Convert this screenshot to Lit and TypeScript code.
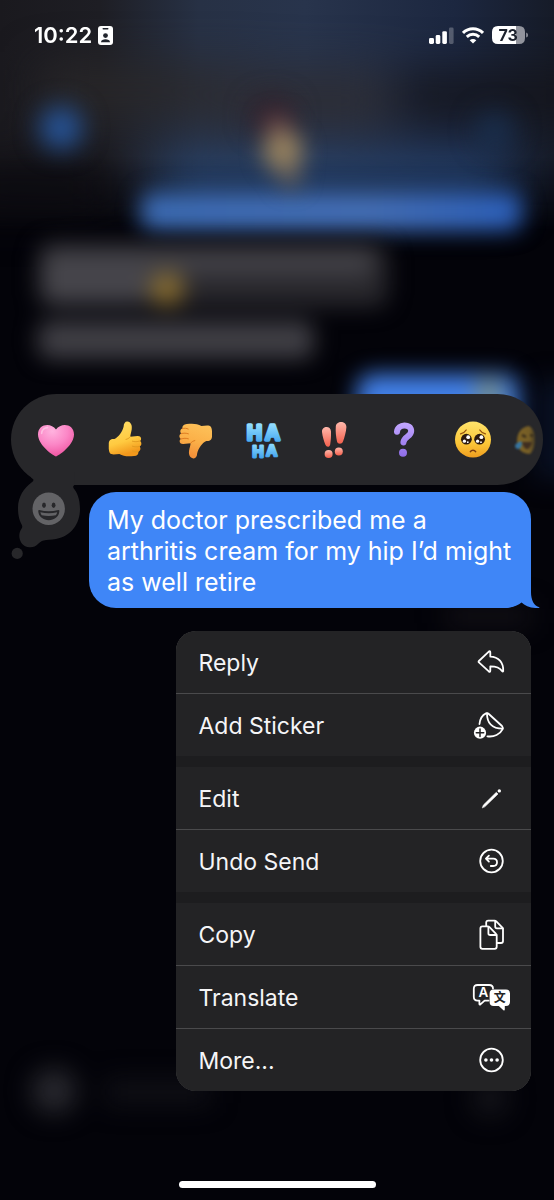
import { LitElement, html, css, svg, TemplateResult, SVGTemplateResult } from "lit";
import { customElement, property } from "lit/decorators.js";

type IconName = "reply" | "sticker" | "edit" | "undo" | "copy" | "translate" | "more";

const icons: Record<IconName, SVGTemplateResult> = {
  reply: svg`<path d="M7.9 15 L17.8 5.6 Q19.3 4.6 19.3 6.6 V10.6 C27.5 10.8 32.6 16.4 32.2 25.2 Q31.8 26 31.2 25.2 C28.8 21.6 25.5 20.4 19.3 20.4 V24.4 Q19.3 26.5 17.8 25.4 L7.9 16.4 Q7.2 15.7 7.9 15 Z"/>`,
  sticker: svg`
    <path d="M8.5 15 C9 10 11.6 6 15 4.4 Q16.5 3.8 17.8 5 L31 17 Q32.3 18.4 31.6 20.2 C29.2 25.4 23 28.2 16.4 27.3"/>
    <path d="M16 4.4 C16 13.4 20.5 19.6 31.7 19.6"/>
    <circle cx="9" cy="23.7" r="6.1" fill="#fff" stroke="none"/>
    <path d="M9 20 V27.4 M5.3 23.7 H12.7" stroke="#232325" stroke-width="1.5"/>`,
  edit: svg`
    <path d="M11.4 25.6 L12.4 23 L25.3 10.3 L27 12 L14 24.6 Z" fill="#fff" stroke-width="0.6"/>
    <circle cx="28.3" cy="8.9" r="1.7" fill="#fff" stroke="none"/>`,
  undo: svg`
    <circle cx="20.5" cy="16" r="11.3"/>
    <path d="M17.9 10.6 L14.9 13.6 L17.9 16.6 M15.2 13.6 H22.2 C27.3 13.6 27.3 21 22.2 21 H19.8"/>`,
  copy: svg`
    <path d="M15.2 7.8 V4.6 Q15.2 2.6 17.2 2.6 H23.6 Q24.6 2.6 25.3 3.3 L31.4 9.6 Q32 10.3 32 11.3 V23 Q32 25 30 25 H26"/>
    <path d="M24.2 3 V8.6 Q24.2 10.4 26 10.4 H31.8"/>
    <path d="M11.4 8.4 H16.8 Q17.8 8.4 18.5 9.1 L25 15.9 Q25.7 16.6 25.7 17.6 V28.8 Q25.7 30.8 23.7 30.8 H11.4 Q9.4 30.8 9.4 28.8 V10.4 Q9.4 8.4 11.4 8.4 Z"/>
    <path d="M17.4 8.8 V15.2 Q17.4 17 19.2 17 H25.4"/>`,
  translate: svg`
    <path d="M17.6 19.6 H13.6 L9.4 23.4 Q8.4 24 8.4 22.8 V19.6 H6.6 Q2.8 19.6 2.8 15.8 V7.8 Q2.8 4 6.6 4 H18.2 Q22 4 22 7.6"/>
    <text class="glyph" x="12.4" y="16.2" font-size="13.5" font-weight="600" fill="#fff" stroke="none" text-anchor="middle">A</text>
    <path d="M22.6 8.6 H35 Q39 8.6 39 12.6 V21 Q39 25 35 25 H33.8 V28.6 Q33.6 30.2 32.4 29.2 L27.8 25 H22.6 Q18.6 25 18.6 21 V12.6 Q18.6 8.6 22.6 8.6 Z" fill="#fff" stroke="none"/>
    <text class="glyph-cjk" x="28.7" y="21" font-size="12" font-weight="700" fill="#232325" stroke="none" text-anchor="middle">文</text>`,
  more: svg`
    <circle cx="20.5" cy="16" r="11.3"/>
    <g fill="#fff" stroke="none"><circle cx="14.9" cy="16" r="1.8"/><circle cx="20.5" cy="16" r="1.8"/><circle cx="26.1" cy="16" r="1.8"/></g>`,
};

@customElement("menu-item")
class MenuItem extends LitElement {
  @property() label = "";
  @property() icon: IconName = "more";

  static styles = css`
    :host { display: block; }
    .item {
      display: flex; align-items: center; justify-content: space-between;
      width: 100%; height: 62px; padding: 0 20px 0 22px; border: 0;
      background: #232325; color: #f5f5f7; text-align: left;
      font: 400 23px/30px Inter, "Liberation Sans", sans-serif;
    }
    .label { padding-top: 2px; }
    .icon { display: block; width: 40px; height: 32px; fill: none; stroke: #fff; stroke-width: 1.8; stroke-linecap: round; stroke-linejoin: round; }
    .glyph { font-family: Inter, sans-serif; }
    .glyph-cjk { font-family: "Noto Sans CJK SC", sans-serif; }
  `;

  render() {
    return html`<button class="item" type="button">
      <span class="label">${this.label}</span>
      <svg class="icon" viewBox="0 0 40 32" aria-hidden="true">${icons[this.icon]}</svg>
    </button>`;
  }
}

const thumb = (fill: string, line: string) => svg`
  <path d="M2.8 23 C2.6 19.6 4.8 17.6 8.4 18 C12.4 16.4 16.2 11 17.6 5.8 C17.8 2.4 19.2 0.4 21.4 0.6 C25 1 26.4 4.6 25.7 8.4 C25.2 11.4 24.4 13.6 24.2 15.8 L31.6 15 C35.4 14.8 36 18.8 34 20 C36 21.4 35.8 24.6 33.6 25.4 C35.2 27 34.4 30 32.4 30.4 C32.8 33 31.2 34.8 28 35 C22 35.8 17.4 35.4 13.4 33 C10 33 5.6 34.4 3.8 32 C2.4 29.4 2.8 26 2.8 23 Z" fill=${fill}/>
  <path d="M34 20 C31 20.9 28.6 20.9 26.4 20.2 M33.6 25.4 C31 26 28.8 26 26.4 25.2 M32.4 30.4 C30.2 31 28.4 30.8 26.6 30 M24.2 15.8 C23 17.4 21.4 18.2 20 18.4" fill="none" stroke=${line} stroke-width="0.9" stroke-linecap="round"/>`;

interface Reaction { label: string; art: SVGTemplateResult; }

const reactions: Reaction[] = [
  {
    label: "Love",
    art: svg`<defs><radialGradient id="heart" cx="0.4" cy="0.2" r="0.85"><stop offset="0" stop-color="#ffb3df"/><stop offset="0.5" stop-color="#fb86c6"/><stop offset="1" stop-color="#ee4f9d"/></radialGradient></defs>
      <path d="M19 35.6 C14 33 1 23.6 1 13.2 C1 3 13.8 0.8 19 8.6 C24.2 0.8 37 3 37 13.2 C37 23.6 24 33 19 35.6 Z" fill="url(#heart)"/>
      <path d="M4.6 12.4 C5 8.8 7.6 6.6 10.6 6.6" fill="none" stroke="#ffd0ea" stroke-width="1.6" stroke-linecap="round" opacity="0.7"/>`,
  },
  {
    label: "Like",
    art: svg`<defs><linearGradient id="up" x1="0" y1="0" x2="0.3" y2="1"><stop offset="0" stop-color="#ffe06a"/><stop offset="0.65" stop-color="#ffca40"/><stop offset="1" stop-color="#f2981c"/></linearGradient></defs>${thumb("url(#up)", "#e09a20")}`,
  },
  {
    label: "Dislike",
    art: svg`<defs><linearGradient id="down" x1="0" y1="1" x2="0.3" y2="0"><stop offset="0" stop-color="#fdc45c"/><stop offset="0.6" stop-color="#fbb048"/><stop offset="1" stop-color="#f4923a"/></linearGradient></defs>
      <g transform="rotate(180 19.4 19)">${thumb("url(#down)", "#d9761e")}</g>`,
  },
  {
    label: "Laugh",
    art: svg`<defs><linearGradient id="haha" gradientUnits="userSpaceOnUse" x1="0" y1="2" x2="0" y2="38"><stop offset="0" stop-color="#97e0ff"/><stop offset="0.54" stop-color="#45a8f0"/><stop offset="0.58" stop-color="#8cdaff"/><stop offset="1" stop-color="#3d9fec"/></linearGradient></defs>
      <text class="haha" fill="url(#haha)" stroke="url(#haha)" stroke-linejoin="round" text-anchor="middle"><tspan x="9.4" y="19.4" font-size="20" stroke-width="3.6">H</tspan><tspan x="27.6" y="19" font-size="20" stroke-width="3.4">A</tspan><tspan x="13" y="35.6" font-size="15" stroke-width="2.8">H</tspan><tspan x="26.8" y="35.4" font-size="15" stroke-width="2.6">A</tspan></text>`,
  },
  {
    label: "Emphasize",
    art: svg`<defs><linearGradient id="bang" x1="0" y1="0" x2="0" y2="1"><stop offset="0" stop-color="#ffb8ab"/><stop offset="1" stop-color="#f4604d"/></linearGradient></defs>
      <g fill="url(#bang)">
        <path d="M7 11 C6.6 4.8 15.8 4.4 16 10.4 C16.2 15.4 15.8 19.6 15.2 23.4 C14.6 26.4 11.6 26.6 10.4 23.8 C8.8 19.6 7.6 15.8 7 11 Z"/>
        <path d="M20.8 5.6 C21.2 -0.8 31.6 -0.4 31.4 6.2 C31 11.2 29.6 16 28 20.6 C27 23.6 22.8 23.6 22 20.6 C21 15.6 20.4 10.4 20.8 5.6 Z"/>
        <circle cx="13.6" cy="33" r="4"/><circle cx="23.8" cy="30.4" r="4"/>
      </g>`,
  },
  {
    label: "Question",
    art: svg`<defs><linearGradient id="ask" gradientUnits="userSpaceOnUse" x1="0" y1="2" x2="0" y2="37"><stop offset="0" stop-color="#c2a6ff"/><stop offset="1" stop-color="#8c6ae6"/></linearGradient></defs>
      <path d="M12 10.8 C12.6 2.4 26.2 2.4 26.2 10 C26.2 15.6 19 15.6 18.4 21.4" fill="none" stroke="url(#ask)" stroke-width="6" stroke-linecap="round"/>
      <circle cx="18" cy="31.8" r="4" fill="url(#ask)"/>`,
  },
  {
    label: "Pleading face",
    art: svg`<defs><linearGradient id="face" x1="0" y1="0" x2="0" y2="1"><stop offset="0" stop-color="#ffe36b"/><stop offset="0.6" stop-color="#fbc638"/><stop offset="1" stop-color="#ee9d1f"/></linearGradient></defs>
      <circle cx="19" cy="18.6" r="18" fill="url(#face)"/>
      <path d="M6.6 12.8 C9 12.2 11 11 12.2 9 M31.4 12.8 C29 12.2 27 11 25.8 9" fill="none" stroke="#93500d" stroke-width="1.3" stroke-linecap="round"/>
      <circle cx="12.4" cy="18.2" r="5.4" fill="#2c1a10"/><circle cx="25.6" cy="18.2" r="5.4" fill="#2c1a10"/>
      <g fill="#fff"><circle cx="14.2" cy="16.2" r="1.9"/><circle cx="10.4" cy="20.2" r="1.6"/><circle cx="13.8" cy="21.2" r="0.9"/><circle cx="27.4" cy="16.2" r="1.9"/><circle cx="23.6" cy="20.2" r="1.6"/><circle cx="27" cy="21.2" r="0.9"/></g>
      <path d="M16.4 30.6 C17.6 28.8 20.4 28.8 21.6 30.6" fill="none" stroke="#7a3c10" stroke-width="1.6" stroke-linecap="round"/>`,
  },
];

@customElement("reaction-bar")
class ReactionBar extends LitElement {
  static styles = css`
    :host { display: block; }
    .bar {
      display: grid; grid-template-columns: repeat(7, 1fr) 35px; align-items: center;
      height: 91px; padding-left: 10px; border-radius: 46px; background: #27272a; overflow: hidden;
    }
    .reaction { display: grid; place-items: center; width: 100%; height: 91px; padding: 0; border: 0; background: none; }
    .art { display: block; width: 38px; height: 38px; overflow: visible; }
    .art-next { display: block; width: 20px; height: 34px; filter: blur(1px); opacity: 0.6; }
    .haha { font-family: Inter, sans-serif; font-weight: 600; }
  `;

  render() {
    return html`<div class="bar" role="toolbar" aria-label="Reactions">
      ${reactions.map((r) => html`<button class="reaction" type="button" aria-label=${r.label}>
        <svg class="art" viewBox="0 0 38 38" aria-hidden="true">${r.art}</svg>
      </button>`)}
      <button class="reaction" type="button" aria-label="More reactions">
        <svg class="art-next" viewBox="0 0 20 34" aria-hidden="true">
          <defs><linearGradient id="fade"><stop offset="0" stop-color="#b98b22"/><stop offset="0.7" stop-color="#a88227"/><stop offset="1" stop-color="#5c4b22"/></linearGradient></defs>
          <path d="M14 3 C6 4 2 10 2 18 C2 26 7 31 15 31 C19 27 20 22 20 17 C20 10 18 5 14 3 Z" fill="url(#fade)"/>
          <path d="M7 12 L11 14 M15 12 L18 13" stroke="#3a2a12" stroke-width="2"/>
          <path d="M7 19 H17 Q15 27 11 26 Q8 24 7 19 Z" fill="#51341c"/>
          <path d="M0 22 Q5 17 7 19 Q7 26 3 26 Q0 26 0 22 Z" fill="#43a9ee"/>
        </svg>
      </button>
    </div>`;
  }
}

@customElement("chat-backdrop")
class ChatBackdrop extends LitElement {
  static styles = css`
    :host { display: block; background: #030309; overflow: hidden; }
    .scene { display: block; width: 100%; height: 1200px; }
  `;

  render(): TemplateResult {
    return html`<svg class="scene" viewBox="0 0 554 1200" preserveAspectRatio="none" aria-hidden="true">
      <defs>
        <filter id="b10" color-interpolation-filters="sRGB" x="-60%" y="-150%" width="220%" height="400%"><feGaussianBlur stdDeviation="11"/></filter>
        <filter id="b14" color-interpolation-filters="sRGB" x="-100%" y="-150%" width="300%" height="400%"><feGaussianBlur stdDeviation="13"/></filter>
        <filter id="b26" color-interpolation-filters="sRGB" x="-50%" y="-100%" width="200%" height="300%"><feGaussianBlur stdDeviation="24"/></filter>
        <linearGradient id="head"><stop offset="0" stop-color="#1a191e"/><stop offset="0.18" stop-color="#1e1e24"/><stop offset="0.36" stop-color="#273145"/><stop offset="0.55" stop-color="#28344c"/><stop offset="0.82" stop-color="#1c2740"/><stop offset="1" stop-color="#161b28"/></linearGradient>
        <linearGradient id="sent"><stop offset="0" stop-color="#3c6cb6"/><stop offset="0.6" stop-color="#4570b8"/><stop offset="1" stop-color="#2c61be"/></linearGradient>
        <linearGradient id="edge" x1="0" y1="0" x2="0" y2="1"><stop offset="0" stop-color="#fff"/><stop offset="0.68" stop-color="#fff"/><stop offset="1" stop-color="#000"/></linearGradient>
        <mask id="headMask"><rect width="554" height="230" fill="url(#edge)"/></mask>
      </defs>
      <rect width="554" height="230" fill="url(#head)" mask="url(#headMask)"/>
      <g filter="url(#b26)">
        <rect x="40" y="68" width="220" height="44" fill="#2a2829"/>
        <rect x="200" y="72" width="190" height="56" fill="#2d2d34"/>
        <rect x="400" y="74" width="190" height="44" fill="#14141a"/>
        <rect x="160" y="160" width="350" height="44" fill="#284d83" opacity="0.75"/>
        <rect x="-40" y="165" width="150" height="45" fill="#0b0a0f"/>
      </g>
      <g filter="url(#b14)">
        <circle cx="61" cy="128" r="21" fill="#27579e"/>
        <circle cx="495" cy="130" r="20" fill="#1b375e" opacity="0.6"/>
        <ellipse cx="272" cy="116" rx="22" ry="18" fill="#30202c"/>
      </g>
      <rect x="141" y="193" width="380" height="37" rx="10" fill="url(#sent)" filter="url(#b10)"/>
      <g filter="url(#b10)">
        <ellipse cx="277" cy="124" rx="13" ry="9" fill="#6e4a4b"/>
        <ellipse cx="283" cy="151" rx="20" ry="20" fill="#98825e"/>
        <ellipse cx="290" cy="176" rx="10" ry="12" fill="#6b6259"/>
        <rect x="38" y="243" width="350" height="64" rx="14" fill="#28272c"/>
        <rect x="42" y="248" width="332" height="28" rx="12" fill="#414046"/>
        <rect x="42" y="262" width="108" height="40" rx="12" fill="#46454b"/>
        <ellipse cx="167" cy="289" rx="17" ry="17" fill="#866b30"/>
        <rect x="38" y="321" width="276" height="38" rx="12" fill="#403f45"/>
        <rect x="357" y="374" width="162" height="60" rx="16" fill="#4280e8"/>
        <ellipse cx="489" cy="394" rx="14" ry="15" fill="#7b8f80"/>
      </g>
      <g filter="url(#b14)">
        <rect x="534" y="380" width="60" height="100" fill="#0d1c3a" opacity="0.5"/>
        <circle cx="54" cy="1091" r="22" fill="#2a2a30"/>
        <rect x="105" y="1080" width="105" height="24" fill="#101016"/>
        <circle cx="490" cy="1098" r="18" fill="#14141a"/>
        <rect x="445" y="606" width="86" height="20" fill="#131116"/>
      </g>
    </svg>`;
  }
}

@customElement("app-root")
class AppRoot extends LitElement {
  static styles = css`
    :host { display: block; font-family: Inter, "Liberation Sans", sans-serif; color: #fff; }
    .screen { position: relative; isolation: isolate; display: flex; flex-direction: column; min-height: 100vh; box-sizing: border-box; padding-bottom: 12px; overflow: hidden; }
    .backdrop { position: absolute; inset: 0; z-index: -1; }
    .status { display: flex; align-items: center; justify-content: space-between; height: 70px; padding: 0 26px 0 34px; }
    .status-group { display: flex; align-items: center; gap: 8px; }
    .status-group-tight { gap: 6px; }
    .time { font-size: 22px; line-height: 26px; font-weight: 600; }
    .status svg { display: block; }
    .battery-level { font: 700 16px Inter, sans-serif; }
    .overlay { display: flex; flex-direction: column; margin-top: 324px; }
    .reactions { margin: 0 11px; }
    .message-row { display: flex; gap: 9px; margin-top: 7px; padding: 0 23px 0 11px; }
    .custom { flex: none; width: 69px; height: 70px; padding: 0; border: 0; background: none; }
    .custom svg { display: block; overflow: visible; }
    .bubble { position: relative; flex: 1; margin: 0; padding: 13px 14px 10px 18px; border-radius: 27px; background: #3f86f7; font-size: 25px; line-height: 31px; }
    .tail { position: absolute; right: -9px; bottom: 0; }
    .menu { display: flex; flex-direction: column; gap: 11px; align-self: flex-end; width: 64%; margin: 23px 23px 0 0; border-radius: 20px; overflow: hidden; background: #1d1d1f; }
    .menu-group { display: flex; flex-direction: column; gap: 1px; background: #4a4a4c; }
    .home { width: 197px; height: 7px; margin: auto auto 0; border-radius: 4px; background: #fff; }
  `;

  private groups: { label: string; icon: IconName }[][] = [
    [{ label: "Reply", icon: "reply" }, { label: "Add Sticker", icon: "sticker" }],
    [{ label: "Edit", icon: "edit" }, { label: "Undo Send", icon: "undo" }],
    [{ label: "Copy", icon: "copy" }, { label: "Translate", icon: "translate" }, { label: "More...", icon: "more" }],
  ];

  render() {
    return html`<div class="screen">
      <chat-backdrop class="backdrop"></chat-backdrop>
      <header class="status">
        <div class="status-group status-group-tight">
          <span class="time">10:22</span>
          <svg width="15" height="19" viewBox="0 0 15 19" aria-hidden="true">
            <rect width="15" height="19" rx="3" fill="#fff"/>
            <rect x="4.5" y="2" width="6" height="1.4" rx="0.7" fill="#20242c"/>
            <circle cx="7.5" cy="9.6" r="2.4" fill="#20242c"/>
            <path d="M3 16.2 C3 12.4 12 12.4 12 16.2 Z" fill="#20242c"/>
          </svg>
        </div>
        <div class="status-group">
          <svg width="25" height="17" viewBox="0 0 25 17" aria-hidden="true" fill="#fff">
            <rect x="0" y="11" width="5" height="6" rx="1.4"/><rect x="6.7" y="8" width="4.6" height="9" rx="1.4"/>
            <rect x="13.3" y="4.2" width="4.6" height="12.8" rx="1.4"/><rect x="20" y="0.6" width="4.6" height="16.4" rx="1.4" opacity="0.25"/>
          </svg>
          <svg width="22" height="17" viewBox="0 0 22 17" aria-hidden="true" fill="none" stroke="#fff" stroke-width="3">
            <path d="M1 5.9 C6.6 0.4 15.4 0.4 21 5.9"/><path d="M4.8 9.8 C8.4 6.5 13.6 6.5 17.2 9.8"/>
            <path d="M11 16.6 L7.7 13.3 C9.6 11.5 12.4 11.5 14.3 13.3 Z" fill="#fff" stroke="none"/>
          </svg>
          <svg width="36" height="18" viewBox="0 0 36 18" role="img" aria-label="Battery 73 percent">
            <path d="M24 0 H27 Q33 0 33 6 V12 Q33 18 27 18 H24 Z" fill="#92949d"/>
            <path d="M6 0 H24 V18 H6 Q0 18 0 12 V6 Q0 0 6 0 Z" fill="#fff"/>
            <path d="M34.2 6.4 Q36 7 36 9 T34.2 11.6 Z" fill="#92949d"/>
            <text class="battery-level" x="16.2" y="14.8" text-anchor="middle" fill="#1c212c">73</text>
          </svg>
        </div>
      </header>

      <main class="overlay">
        <reaction-bar class="reactions"></reaction-bar>
        <section class="message-row">
          <button class="custom" type="button" aria-label="React with emoji">
            <svg width="69" height="70" viewBox="0 0 69 70" aria-hidden="true">
              <g fill="#27272a">
                <path d="M26 -20 L20 -14.6 Q22 -13.2 22.4 -12.6 Q23 -11 20.5 -9.4 C13 -4 7 5 7 16 C7 24 8.6 29 11 33.2 Q12 35.4 10.4 37 C6.4 42 8 54.4 18.4 55.2 C26 55.8 27.6 49.4 32.6 48.4 C36 47.8 40 48 45 47 C60 44 69 32 69 17 C69 7 66 0 62.4 -4 Q61.4 -6 63.6 -7.2 V-20 Z"/>
                <circle cx="6.2" cy="61.4" r="5.6"/>
              </g>
              <circle cx="37.7" cy="16.8" r="16.2" fill="#636366"/>
              <ellipse cx="33" cy="13.2" rx="1.9" ry="2.7" fill="#27272a"/><ellipse cx="42.6" cy="13.2" rx="1.9" ry="2.7" fill="#27272a"/>
              <path d="M27.2 18.8 Q27.2 18 28.2 18 Q37.8 20.4 47.4 18 Q48.4 18 48.4 18.8 C47.8 31.4 27.8 31.4 27.2 18.8 Z" fill="#27272a"/>
              <path d="M29.4 20.2 Q37.8 22.2 46.2 20.2 Q45.8 22 44.8 23.2 Q37.8 24.6 30.8 23.2 Q29.8 22 29.4 20.2 Z" fill="#636366"/>
            </svg>
          </button>
          <p class="bubble">My doctor prescribed me a arthritis cream for my hip I’d might as well retire
            <svg class="tail" width="36" height="30" viewBox="0 0 36 30" aria-hidden="true"><path d="M27 0 V14 C27 22 30 28 35.4 29.2 Q36 30 34.6 30 C27 30.4 21 28 17.6 24.4 C14 27.4 8 30 0 30 V0 Z" fill="#3f86f7"/></svg>
          </p>
        </section>
        <nav class="menu" aria-label="Message actions">
          ${this.groups.map((g) => html`<div class="menu-group">
            ${g.map((i) => html`<menu-item .label=${i.label} .icon=${i.icon}></menu-item>`)}
          </div>`)}
        </nav>
      </main>
      <div class="home"></div>
    </div>`;
  }
}
